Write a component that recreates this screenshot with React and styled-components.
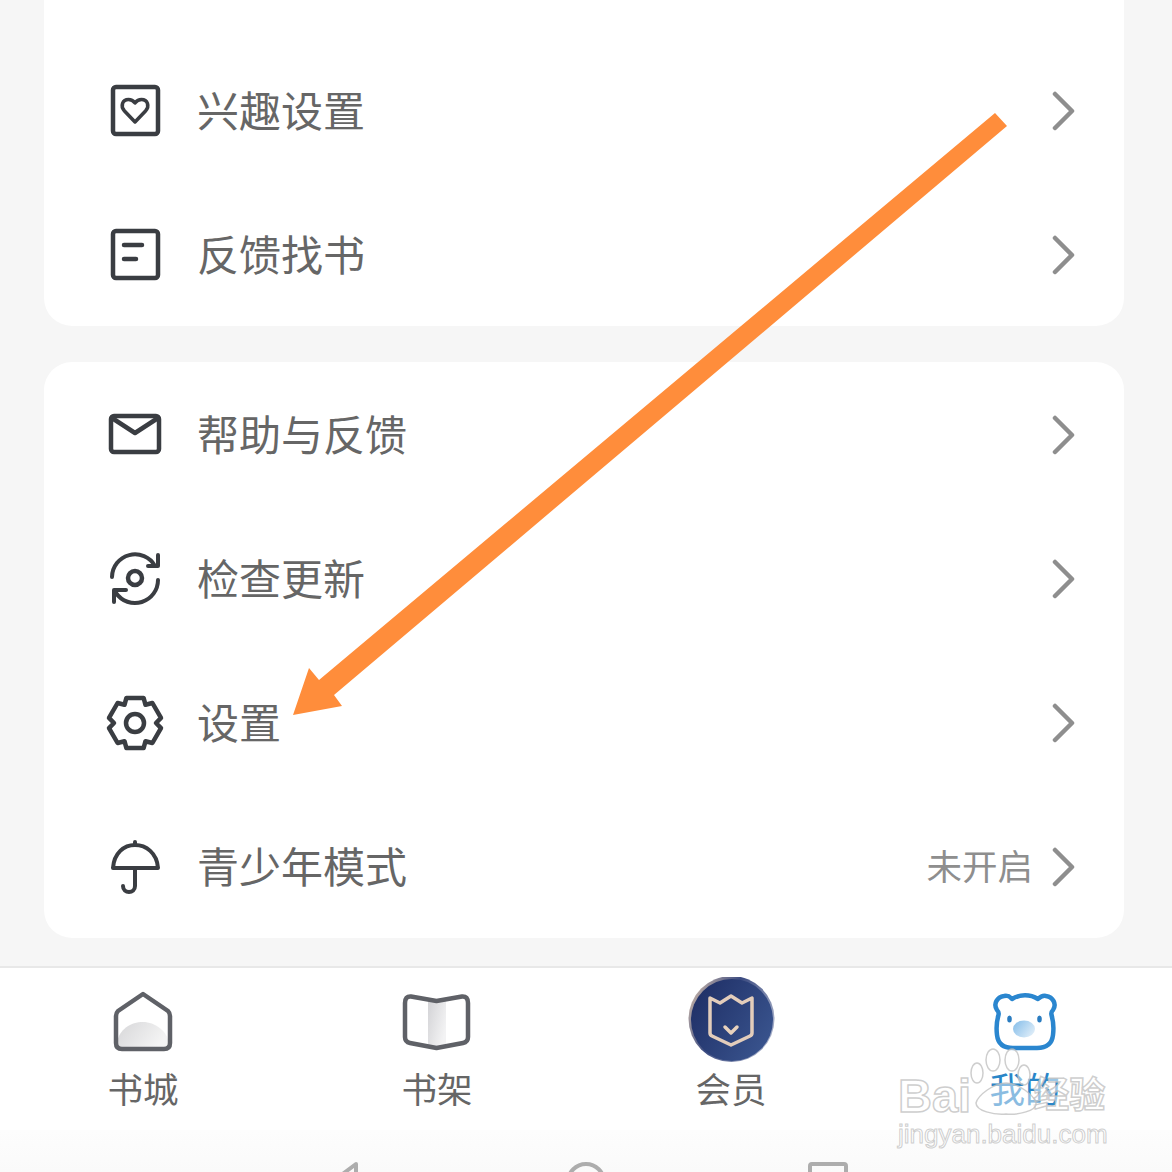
import React from 'react';
import styled, { createGlobalStyle } from 'styled-components';

const GlobalStyle = createGlobalStyle`
  html, body {
    margin: 0;
    padding: 0;
    background: #f6f6f6;
  }
`;

const Screen = styled.div`
  position: relative;
  width: 1172px;
  height: 1172px;
  overflow: hidden;
  display: flex;
  flex-direction: column;
  background: #f6f6f6;
  font-family: "Noto Sans CJK SC", "Noto Sans", sans-serif;
`;

const Content = styled.main`
  flex: 1;
  display: flex;
  flex-direction: column;
  gap: 36px;
  padding: 0 48px 0 44px;
`;

const Card = styled.section`
  display: flex;
  flex-direction: column;
  background: #fff;
  border-radius: 28px;
  ${(p) => p.$first && `
    padding-top: 38px;
    border-radius: 0 0 28px 28px;
  `}
`;

const Row = styled.div`
  height: 144px;
  box-sizing: border-box;
  display: flex;
  align-items: center;
  padding: 2px 48px 0 61px;
`;

const RowIcon = styled.svg`
  width: 60px;
  height: 60px;
  flex: none;
  fill: none;
  stroke: #3a3d42;
  stroke-width: 4.5;
  stroke-linecap: round;
  stroke-linejoin: round;
`;

const RowLabel = styled.span`
  margin: 0 0 4px 32px;
  flex: 1;
  font-size: 42px;
  line-height: 56px;
  color: #666;
`;

const RowValue = styled.span`
  font-size: 35.5px;
  line-height: 46px;
  color: #8e8e8e;
  margin: 0 19px 4px 0;
`;

const Chevron = styled.svg`
  width: 24px;
  height: 40px;
  flex: none;
  fill: none;
  stroke: #8e8e8e;
  stroke-width: 4.5;
  stroke-linecap: round;
  stroke-linejoin: round;
`;

const TabBar = styled.nav`
  height: 164px;
  flex: none;
  box-sizing: border-box;
  border-top: 2px solid #e8e8e8;
  background: #fff;
  padding-top: 9px;
  display: grid;
  grid-template-columns: repeat(4, 294px);
  margin-left: -4px;
  width: 1176px;
`;

const Tab = styled.div`
  display: flex;
  flex-direction: column;
  align-items: center;
`;

const TabIcon = styled.svg`
  width: 90px;
  height: 90px;
  display: block;
  fill: none;
`;

const TabLabel = styled.span`
  margin-top: -2px;
  font-size: 35.5px;
  line-height: 46px;
  color: ${(p) => (p.$active ? '#2a86c8' : '#666')};
`;

const SystemBar = styled.div`
  height: 42px;
  flex: none;
  overflow: hidden;
  box-sizing: border-box;
  background: linear-gradient(#fdfdfd, #fafafa);
  padding: 32px 0 0 324px;
  display: flex;
  gap: 202px;
`;

const SystemIcon = styled.svg`
  width: 40px;
  height: 40px;
  flex: none;
  fill: none;
  stroke: #adadad;
  stroke-width: 4;
  stroke-linejoin: round;
`;

const ArrowLayer = styled.svg`
  position: absolute;
  top: 0;
  left: 0;
  width: 1172px;
  height: 1172px;
  pointer-events: none;
`;

const Watermark = styled.div`
  position: absolute;
  left: 898px;
  top: 1045px;
  width: 214px;
  height: 104px;
  pointer-events: none;
`;

const WatermarkLine = styled.div`
  display: flex;
  align-items: flex-end;
  height: 74px;
`;

const Outlined = styled.span`
  color: rgba(255, 255, 255, 0.55);
  -webkit-text-stroke: 1.5px rgba(190, 190, 190, 0.75);
  font-family: "Liberation Sans", "Noto Sans CJK SC", sans-serif;
  font-weight: 700;
  font-size: ${(p) => p.$size}px;
  line-height: ${(p) => p.$size}px;
  margin-left: ${(p) => p.$gap || 0}px;
  margin-bottom: ${(p) => p.$lift || 0}px;
`;

const Domain = styled.div`
  color: rgba(255, 255, 255, 0.55);
  -webkit-text-stroke: 1px rgba(190, 190, 190, 0.75);
  font-family: "Liberation Sans", sans-serif;
  font-size: 26px;
  line-height: 30px;
  white-space: nowrap;
`;

const PawIcon = styled.svg`
  position: absolute;
  left: 70px;
  top: 0;
  width: 70px;
  height: 72px;
  fill: rgba(255, 255, 255, 0.45);
  stroke: rgba(190, 190, 190, 0.75);
  stroke-width: 1.5;
`;

// six lobed gear, centred on 30,30
const gearPath = (() => {
  const pts = [];
  for (let i = 0; i < 6; i++) {
    const a = (i * 60 - 90) * (Math.PI / 180);
    const d = Math.PI / 180;
    const at = (r, o) => [30 + r * Math.cos(a + o * d), 30 + r * Math.sin(a + o * d)];
    pts.push(at(21, -30), at(26.5, -19), at(26.5, 19));
  }
  return 'M' + pts.map((p) => p[0].toFixed(1) + ' ' + p[1].toFixed(1)).join(' L') + ' Z';
})();

const icons = {
  heart: (
    <>
      <rect x="8" y="6" width="45" height="47" rx="3" />
      <path d="M30 41 L19.5 30 C15 25 17.5 18.5 23.5 18.5 C26.5 18.5 28.5 20 30 22 C31.5 20 33.5 18.5 36.5 18.5 C42.5 18.5 45 25 40.5 30 Z" strokeWidth="3.5" />
    </>
  ),
  form: (
    <>
      <rect x="8" y="6" width="45" height="47" rx="3" />
      <path d="M19 20 H37 M19 34 H31" />
    </>
  ),
  mail: (
    <>
      <rect x="6" y="11" width="48" height="36" rx="3" />
      <path d="M7 13 L30 28 L53 13" />
    </>
  ),
  sync: (
    <>
      <circle cx="30" cy="29" r="7" />
      <path d="M7 28 A23 23 0 0 1 50 17 M53 6 V17 H43 M53 31 A23 23 0 0 1 11 44 M21 41 H9 V53" strokeWidth="4" />
    </>
  ),
  gear: (
    <>
      <path d={gearPath} />
      <circle cx="30" cy="30" r="9" />
    </>
  ),
  umbrella: (
    <>
      <path d="M8 31 C9 16 19 8 30 8 C41 8 52 16 53 31 Z M30 5 V8 M30 31 V49 C30 57 18 57 18 49" strokeWidth="4" />
    </>
  ),
};

const rowsTop = [
  { icon: 'heart', label: '兴趣设置' },
  { icon: 'form', label: '反馈找书' },
];

const rowsBottom = [
  { icon: 'mail', label: '帮助与反馈' },
  { icon: 'sync', label: '检查更新' },
  { icon: 'gear', label: '设置' },
  { icon: 'umbrella', label: '青少年模式', value: '未开启' },
];

const MenuRow = ({ icon, label, value }) => (
  <Row>
    <RowIcon viewBox="0 0 60 60">{icons[icon]}</RowIcon>
    <RowLabel>{label}</RowLabel>
    {value && <RowValue>{value}</RowValue>}
    <Chevron viewBox="0 0 24 40">
      <path d="M3 3 L20 20 L3 37" />
    </Chevron>
  </Row>
);

const HomeIcon = () => (
  <TabIcon viewBox="0 0 90 90">
    <defs>
      <linearGradient id="homeFill" x1="0" y1="0" x2="1" y2="0.4">
        <stop offset="0" stopColor="#d6d6d8" />
        <stop offset="1" stopColor="#f4f4f4" />
      </linearGradient>
    </defs>
    <path d="M19 70 V66 C21 52 33 45 45 45 C57 45 69 54 71 66 V70 Z" fill="url(#homeFill)" />
    <path
      d="M45 17 L70 34 Q72 36 72 39 V66 Q72 72 66 72 H24 Q18 72 18 66 V39 Q18 36 20 34 Z"
      stroke="#5f6167"
      strokeWidth="4.5"
      strokeLinejoin="round"
    />
  </TabIcon>
);

const BookIcon = () => (
  <TabIcon viewBox="0 0 90 90">
    <defs>
      <linearGradient id="bookFill" x1="0" y1="0" x2="1" y2="0.6">
        <stop offset="0" stopColor="#d2d2d5" />
        <stop offset="1" stopColor="#f3f3f4" />
      </linearGradient>
    </defs>
    <path d="M36 22 H54 V69 H36 Z" fill="url(#bookFill)" />
    <path
      d="M19 19.5 L44.5 24 L70 19.5 Q76 19 76 26 V60 Q76 65 71 66 L44.5 71 L18 66 Q13 65 13 60 V26 Q13 19 19 19.5 Z"
      stroke="#5f6167"
      strokeWidth="4.5"
      strokeLinejoin="round"
    />
  </TabIcon>
);

const MemberIcon = () => (
  <TabIcon viewBox="0 0 90 90">
    <defs>
      <linearGradient id="memberFill" x1="0" y1="0.2" x2="1" y2="0.8">
        <stop offset="0" stopColor="#1f2f66" />
        <stop offset="1" stopColor="#3a558f" />
      </linearGradient>
      <linearGradient id="memberRim" x1="0" y1="0" x2="1" y2="0.5">
        <stop offset="0" stopColor="#e6cbb0" />
        <stop offset="0.5" stopColor="#3a4a80" />
        <stop offset="1" stopColor="#a0a9c4" />
      </linearGradient>
    </defs>
    <circle cx="45.5" cy="42" r="43" fill="url(#memberRim)" />
    <circle cx="46" cy="43" r="41" fill="url(#memberFill)" />
    <path
      d="M24 21 L34 26 L45 19 L56 26 L66 21 V56 Q66 58 64 59 L45 68 L26 59 Q24 58 24 56 Z"
      stroke="#e3cdbb"
      strokeWidth="3.5"
      strokeLinejoin="round"
    />
    <path d="M39 50 L45 56 L51 50" stroke="#e8d2bd" strokeWidth="3.5" strokeLinecap="round" strokeLinejoin="round" />
  </TabIcon>
);

const BearIcon = () => (
  <TabIcon viewBox="0 0 90 90">
    <defs>
      <linearGradient id="bearNose" x1="0" y1="0.2" x2="1" y2="0.8">
        <stop offset="0" stopColor="#8ac0ea" />
        <stop offset="1" stopColor="#e2eff9" />
      </linearGradient>
    </defs>
    <path
      d="M24 19 C29 18 30 20 32 22 C40 17 50 17 58 22 C60 20 62 18 66 19 C73 20 77 27 73 33 C71 35 71 36 71.5 38 C73 43 74 50 73 58 C72 67 66 71 57 71 H33 C24 71 18 67 17 58 C16 50 17 43 18.5 38 C19 36 19 35 17 33 C13 27 17 20 24 19 Z"
      stroke="#2a86cf"
      strokeWidth="4.5"
      strokeLinejoin="round"
    />
    <ellipse cx="29.5" cy="42" rx="2.3" ry="3.5" fill="#2a7cc0" />
    <ellipse cx="59.5" cy="42" rx="2.3" ry="3.5" fill="#2a7cc0" />
    <ellipse cx="44" cy="52" rx="11" ry="8.5" fill="url(#bearNose)" />
  </TabIcon>
);

const tabs = [
  { label: '书城', Icon: HomeIcon },
  { label: '书架', Icon: BookIcon },
  { label: '会员', Icon: MemberIcon },
  { label: '我的', Icon: BearIcon, active: true },
];

export default function App() {
  return (
    <Screen>
      <GlobalStyle />
      <Content>
        <Card $first>
          {rowsTop.map((r) => <MenuRow key={r.label} {...r} />)}
        </Card>
        <Card>
          {rowsBottom.map((r) => <MenuRow key={r.label} {...r} />)}
        </Card>
      </Content>
      <TabBar>
        {tabs.map(({ label, Icon, active }) => (
          <Tab key={label}>
            <Icon />
            <TabLabel $active={active}>{label}</TabLabel>
          </Tab>
        ))}
      </TabBar>
      <SystemBar>
        <SystemIcon viewBox="0 0 40 40"><path d="M32 2 L8 20 L32 38 Z" /></SystemIcon>
        <SystemIcon viewBox="0 0 40 40"><circle cx="20" cy="20" r="18" /></SystemIcon>
        <SystemIcon viewBox="0 0 40 40"><rect x="2" y="2" width="36" height="36" rx="2" /></SystemIcon>
      </SystemBar>
      <ArrowLayer viewBox="0 0 1172 1172">
        <polygon
          points="995,113 1007,126 334,695 342,706 293,715 309,668 319,680"
          fill="#ff8d3b"
        />
      </ArrowLayer>
      <Watermark>
        <WatermarkLine>
          <Outlined $size={47}>Bai</Outlined>
          <Outlined $size={36} $gap={62} $lift={5}>经验</Outlined>
        </WatermarkLine>
        <PawIcon viewBox="0 0 70 72">
          <ellipse cx="9" cy="28" rx="6" ry="10" />
          <ellipse cx="25" cy="15" rx="7" ry="11" />
          <ellipse cx="44" cy="15" rx="7" ry="11" />
          <ellipse cx="56" cy="30" rx="6" ry="10" />
          <path d="M38 38 C50 38 66 50 68 58 C69 66 50 70 38 69 C26 70 8 66 8 58 C10 50 26 38 38 38 Z" />
        </PawIcon>
        <Domain>jingyan.baidu.com</Domain>
      </Watermark>
    </Screen>
  );
}
